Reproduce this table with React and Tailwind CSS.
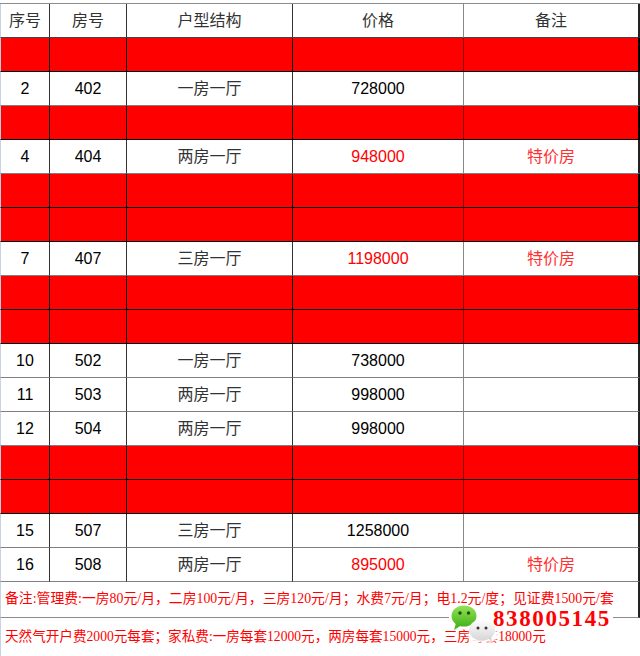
const ROWS = [
  { red: true },
  { no: '2', room: '402', type: '一房一厅', price: '728000' },
  { red: true },
  { no: '4', room: '404', type: '两房一厅', price: '948000', hot: true },
  { red: true },
  { red: true },
  { no: '7', room: '407', type: '三房一厅', price: '1198000', hot: true },
  { red: true },
  { red: true },
  { no: '10', room: '502', type: '一房一厅', price: '738000' },
  { no: '11', room: '503', type: '两房一厅', price: '998000' },
  { no: '12', room: '504', type: '两房一厅', price: '998000' },
  { red: true },
  { red: true },
  { no: '15', room: '507', type: '三房一厅', price: '1258000' },
  { no: '16', room: '508', type: '两房一厅', price: '895000', hot: true },
];

const grid = 'grid grid-cols-[50px_77px_166px_171px_176px]';
const num = { fontFamily: '"Liberation Sans", "Noto Sans CJK SC", sans-serif' };

function Row({ row }) {
  if (row.red) {
    return (
      <div className={`${grid} h-[34px] bg-[#ff0000]`}>
        <div className="border-l border-l-[#c9d1e3] border-r border-b border-black" />
        <div className="border-r border-b border-black" />
        <div className="border-r border-b border-black" />
        <div className="border-r border-b border-r-[#8a0000] border-b-black" />
        <div className="border-r-2 border-b border-black" />
      </div>
    );
  }
  return (
    <div className={`${grid} h-[34px] bg-white text-[16px]`} style={num}>
      <div className="flex items-center justify-center border-l border-l-[#c9d1e3] border-r border-r-[#333] border-b border-b-[#808080] text-black">
        {row.no}
      </div>
      <div className="flex items-center justify-center border-r border-r-[#333] border-b border-b-[#808080] text-black">
        {row.room}
      </div>
      <div className="flex items-center justify-center border-r border-r-[#333] border-b border-b-[#808080] text-[#333]">
        {row.type}
      </div>
      <div
        className={`flex items-center justify-center border-r border-r-[#888] border-b border-b-[#808080] ${
          row.hot ? 'text-[#ff0000]' : 'text-black'
        }`}
      >
        {row.price}
      </div>
      <div className="flex items-center justify-center border-r-2 border-r-[#222] border-b border-b-[#808080] text-[#ff3030]">
        {row.hot ? '特价房' : ''}
      </div>
    </div>
  );
}

function WechatMark() {
  return (
    <>
      {/* white patches that hide the rule and text under the watermark */}
      <div className="absolute left-[449px] top-[609px] h-[18px] w-[164px] bg-white" />
      <div className="absolute left-[468px] top-[628px] h-[14px] w-[30px] rounded-full bg-white blur-[1px]" />
      <svg className="absolute left-[448px] top-[603px]" width="50" height="40" viewBox="0 0 50 40">
        <defs>
          <linearGradient id="g1" x1="0" y1="0" x2="0" y2="1">
            <stop offset="0" stopColor="#93e356" />
            <stop offset="1" stopColor="#48b31c" />
          </linearGradient>
          <linearGradient id="g2" x1="0" y1="0" x2="0" y2="1">
            <stop offset="0" stopColor="#ffffff" />
            <stop offset="1" stopColor="#d6d6d6" />
          </linearGradient>
        </defs>
        <ellipse cx="16" cy="13" rx="12.5" ry="10.5" fill="url(#g1)" />
        <path d="M8 20 L6 27 L13 22.5 Z" fill="#4cb81e" />
        <circle cx="12" cy="10" r="1.7" fill="#1e4a10" />
        <circle cx="20.5" cy="10" r="1.7" fill="#1e4a10" />
        <ellipse cx="34" cy="27" rx="13" ry="10.5" fill="url(#g2)" />
        <path d="M40 35 L44 39 L43 33 Z" fill="#d6d6d6" />
        <circle cx="30" cy="25" r="1.5" fill="#333" />
        <circle cx="38" cy="25" r="1.5" fill="#333" />
      </svg>
      <div
        className="absolute left-[493px] top-[606px] text-[23px] font-bold leading-[26px] tracking-[1.6px] text-[#ff0000]"
        style={{ fontFamily: '"Liberation Serif", serif', textShadow: '0 0 2px #fff, 0 0 2px #fff' }}
      >
        838005145
      </div>
    </>
  );
}

export default function App() {
  const note = { fontFamily: '"Liberation Serif", "Noto Sans CJK SC", serif' };
  return (
    <div className="relative h-[656px] w-[640px] overflow-hidden bg-white pt-[3px]">
      <div
        className={`${grid} h-[35px] border-t border-t-[#8c8c8c] bg-white text-[16px] text-[#333]`}
        style={num}
      >
        <div className="flex items-center justify-center border-l border-l-[#c9d1e3] border-r border-r-[#333] border-b border-b-[#444]">序号</div>
        <div className="flex items-center justify-center border-r border-r-[#333] border-b border-b-[#444]">房号</div>
        <div className="flex items-center justify-center border-r border-r-[#333] border-b border-b-[#444]">户型结构</div>
        <div className="flex items-center justify-center border-r border-r-[#888] border-b border-b-[#444]">价格</div>
        <div className="flex items-center justify-center border-r-2 border-r-[#222] border-b border-b-[#444]">备注</div>
      </div>
      {ROWS.map((row, i) => (
        <Row key={i} row={row} />
      ))}
      <div
        className="flex h-[36px] items-center border-l border-l-[#c9d1e3] border-r-2 border-r-[#222] border-b border-b-[#8c8c8c] pl-[4px] text-[13.85px] text-[#ff0000]"
        style={note}
      >
        备注:管理费:一房80元/月，二房100元/月，三房120元/月；水费7元/月；电1.2元/度；见证费1500元/套
      </div>
      <div
        className="flex h-[38px] items-center border-l border-l-[#c9d1e3] pl-[4px] text-[13.6px] text-[#ff0000]"
        style={note}
      >
        天然气开户费2000元每套；家私费:一房每套12000元，两房每套15000元，三房每套18000元
      </div>
      <WechatMark />
    </div>
  );
}
